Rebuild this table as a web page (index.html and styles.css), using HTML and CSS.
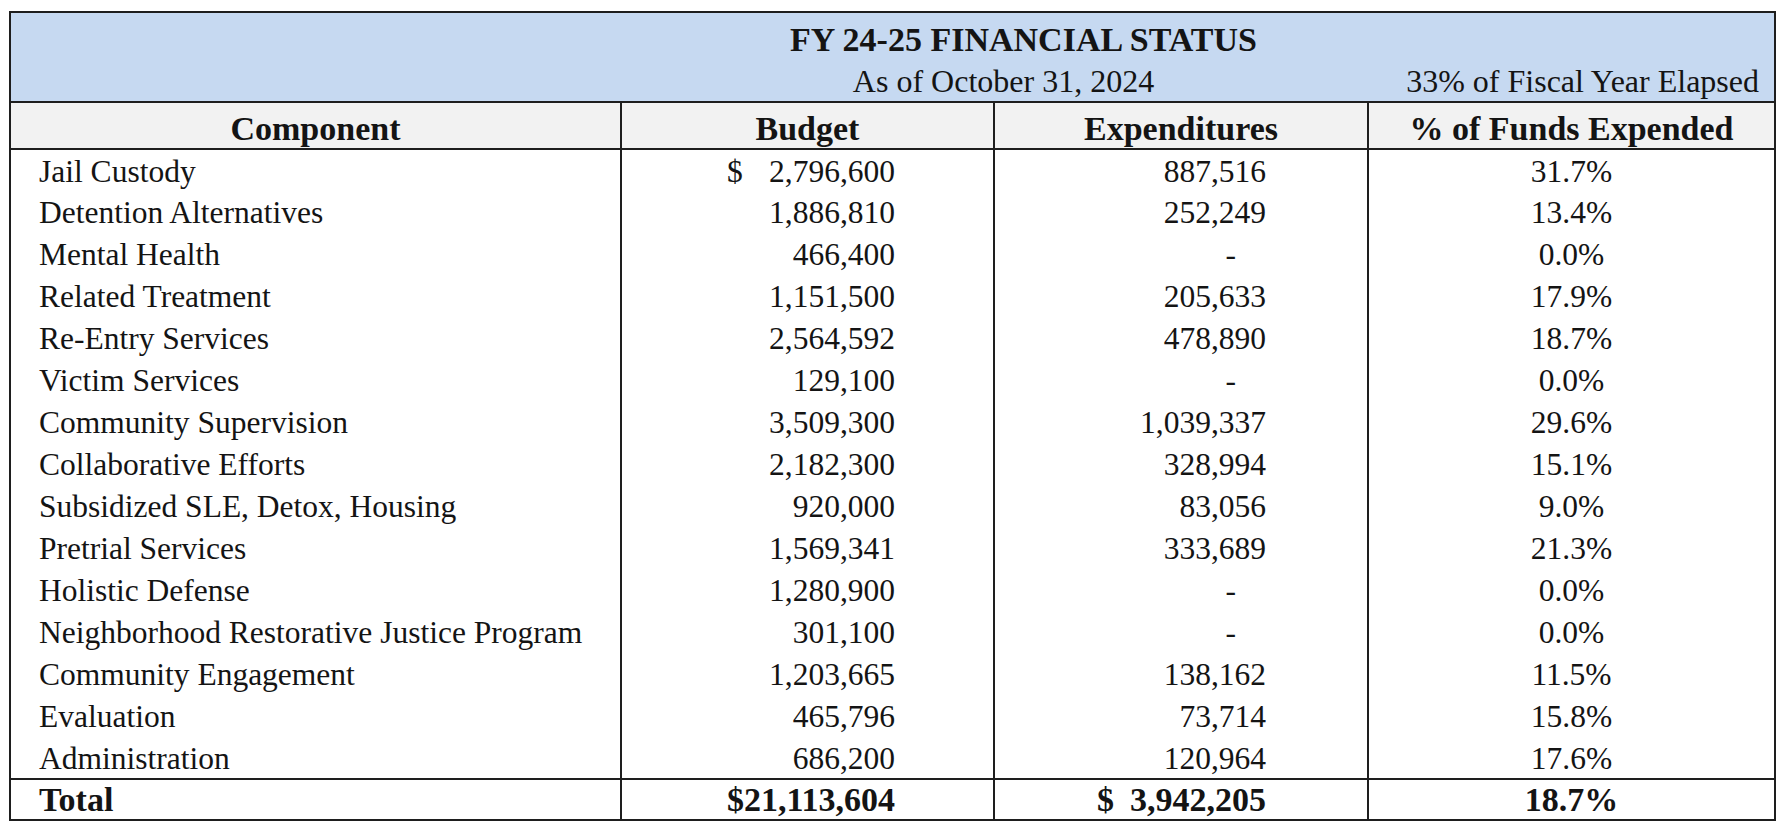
FILE: index.html
```html
<!DOCTYPE html>
<html lang="en">
<head>
<meta charset="utf-8">
<title>FY 24-25 Financial Status</title>
<link rel="stylesheet" href="styles.css">
</head>
<body>
<table class="fin">
  <colgroup>
    <col class="c-comp">
    <col class="c-bud">
    <col class="c-exp">
    <col class="c-pct">
  </colgroup>
  <thead>
    <tr class="banner">
      <th colspan="4">
        <div class="title">FY 24-25 FINANCIAL STATUS</div>
        <div class="subline">
          <span class="asof">As of October 31, 2024</span>
          <span class="elapsed">33% of Fiscal Year Elapsed</span>
        </div>
      </th>
    </tr>
    <tr class="heads">
      <th>Component</th>
      <th>Budget</th>
      <th>Expenditures</th>
      <th>% of Funds Expended</th>
    </tr>
  </thead>
  <tbody>
    <tr><td class="name">Jail Custody</td><td><div class="acct bud"><span>$</span><span>2,796,600</span></div></td><td><div class="acct exp"><span></span><span>887,516</span></div></td><td class="pct">31.7%</td></tr>
    <tr><td class="name">Detention Alternatives</td><td><div class="acct bud"><span></span><span>1,886,810</span></div></td><td><div class="acct exp"><span></span><span>252,249</span></div></td><td class="pct">13.4%</td></tr>
    <tr><td class="name">Mental Health</td><td><div class="acct bud"><span></span><span>466,400</span></div></td><td><div class="acct exp"><span></span><span class="dash">-</span></div></td><td class="pct">0.0%</td></tr>
    <tr><td class="name">Related Treatment</td><td><div class="acct bud"><span></span><span>1,151,500</span></div></td><td><div class="acct exp"><span></span><span>205,633</span></div></td><td class="pct">17.9%</td></tr>
    <tr><td class="name">Re-Entry Services</td><td><div class="acct bud"><span></span><span>2,564,592</span></div></td><td><div class="acct exp"><span></span><span>478,890</span></div></td><td class="pct">18.7%</td></tr>
    <tr><td class="name">Victim Services</td><td><div class="acct bud"><span></span><span>129,100</span></div></td><td><div class="acct exp"><span></span><span class="dash">-</span></div></td><td class="pct">0.0%</td></tr>
    <tr><td class="name">Community Supervision</td><td><div class="acct bud"><span></span><span>3,509,300</span></div></td><td><div class="acct exp"><span></span><span>1,039,337</span></div></td><td class="pct">29.6%</td></tr>
    <tr><td class="name">Collaborative Efforts</td><td><div class="acct bud"><span></span><span>2,182,300</span></div></td><td><div class="acct exp"><span></span><span>328,994</span></div></td><td class="pct">15.1%</td></tr>
    <tr><td class="name">Subsidized SLE, Detox, Housing</td><td><div class="acct bud"><span></span><span>920,000</span></div></td><td><div class="acct exp"><span></span><span>83,056</span></div></td><td class="pct">9.0%</td></tr>
    <tr><td class="name">Pretrial Services</td><td><div class="acct bud"><span></span><span>1,569,341</span></div></td><td><div class="acct exp"><span></span><span>333,689</span></div></td><td class="pct">21.3%</td></tr>
    <tr><td class="name">Holistic Defense</td><td><div class="acct bud"><span></span><span>1,280,900</span></div></td><td><div class="acct exp"><span></span><span class="dash">-</span></div></td><td class="pct">0.0%</td></tr>
    <tr><td class="name">Neighborhood Restorative Justice Program</td><td><div class="acct bud"><span></span><span>301,100</span></div></td><td><div class="acct exp"><span></span><span class="dash">-</span></div></td><td class="pct">0.0%</td></tr>
    <tr><td class="name">Community Engagement</td><td><div class="acct bud"><span></span><span>1,203,665</span></div></td><td><div class="acct exp"><span></span><span>138,162</span></div></td><td class="pct">11.5%</td></tr>
    <tr><td class="name">Evaluation</td><td><div class="acct bud"><span></span><span>465,796</span></div></td><td><div class="acct exp"><span></span><span>73,714</span></div></td><td class="pct">15.8%</td></tr>
    <tr><td class="name">Administration</td><td><div class="acct bud"><span></span><span>686,200</span></div></td><td><div class="acct exp"><span></span><span>120,964</span></div></td><td class="pct">17.6%</td></tr>
  </tbody>
  <tfoot>
    <tr class="total"><td class="name">Total</td><td><div class="acct bud tight"><span>$21,113,604</span></div></td><td><div class="acct exp"><span>$</span><span>3,942,205</span></div></td><td class="pct">18.7%</td></tr>
  </tfoot>
</table>
</body>
</html>
```
FILE: styles.css
```css
html, body {
  margin: 0;
  background: #ffffff;
}
body {
  padding: 11px 0 0 9px;
  font-family: "Liberation Serif", "Times New Roman", serif;
  font-size: 31.5px;
  color: #141414;
}
.fin {
  border-collapse: collapse;
  table-layout: fixed;
  width: 1765px;
  border: 2px solid #1e1e1e;
}
.c-comp { width: 611px; }
.c-bud { width: 373px; }
.c-exp { width: 374px; }
.c-pct { width: 407px; }

.fin td, .fin th {
  padding: 0;
  box-sizing: border-box;
  vertical-align: top;
  border-left: 2px solid #1e1e1e;
  border-right: 2px solid #1e1e1e;
}

.fin .banner th {
  background: #c6d9f1;
  height: 87px;
  font-weight: normal;
  border-bottom: 2px solid #1e1e1e;
}
.title {
  font-weight: bold;
  font-size: 34px;
  text-align: center;
  padding: 9px 0 0 262px;
  line-height: 36px;
}
.subline {
  display: grid;
  grid-template-columns: 611px 747px 1fr;
  font-size: 32px;
  line-height: 40px;
  margin-top: 3px;
}
.asof {
  grid-column: 2;
  text-align: center;
  padding-left: 16px;
}
.elapsed {
  grid-column: 3;
  text-align: right;
  padding-right: 15px;
}

.fin .heads th {
  background: #f2f2f2;
  height: 46px;
  line-height: 38px;
  padding-top: 7px;
  font-size: 34px;
  text-align: center;
  font-weight: bold;
  border-bottom: 2px solid #1e1e1e;
}

.fin tbody td {
  height: 42px;
  line-height: 38px;
  padding-top: 3px;
}
.fin .name {
  padding-left: 28px;
  white-space: nowrap;
}
.acct {
  display: flex;
  justify-content: space-between;
}
.acct.tight { justify-content: flex-end; }
.acct.bud { padding: 0 98px 0 105px; }
.acct.exp { padding: 0 101px 0 102px; }
.dash { padding-right: 30px; }
.pct { text-align: center; }

.fin .total td {
  border-top: 2px solid #1e1e1e;
  border-bottom: 2px solid #1e1e1e;
  height: 40px;
  line-height: 38px;
  padding-top: 1px;
  font-size: 34px;
  font-weight: bold;
}
```
